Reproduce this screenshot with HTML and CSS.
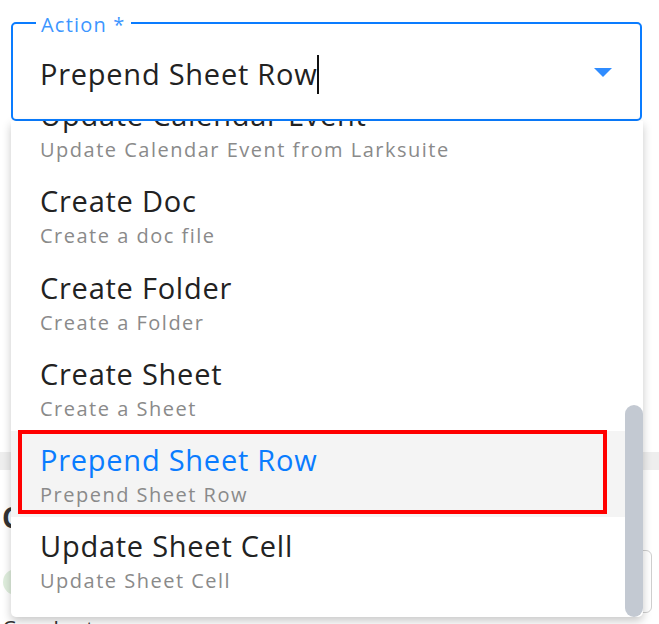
FILE: index.html
```html
<!DOCTYPE html>
<html>
<head>
<meta charset="utf-8">
<link rel="stylesheet" href="styles.css">
</head>
<body>
<div class="page">
  <fieldset class="field">
    <legend class="field-label">Action *</legend>
    <div class="field-row">
      <span class="field-value">Prepend Sheet Row</span><span class="caret"></span>
      <svg class="arrow" width="18" height="9" viewBox="0 0 18 9"><path d="M0 0 L18 0 L9 9 Z" fill="#2f8cff"/></svg>
    </div>
  </fieldset>
  <div class="behind">
    <div class="band"></div>
    <div class="heading">Configure</div>
    <div class="avatar-row"><span class="avatar"></span><span class="side-box"></span></div>
    <div class="conf">Conduct</div>
  </div>

  <div class="menu">
    <ul class="list">
      <li class="item"><div class="title">Update Calendar Event</div><div class="sub">Update Calendar Event from Larksuite</div></li>
      <li class="item"><div class="title">Create Doc</div><div class="sub">Create a doc file</div></li>
      <li class="item"><div class="title">Create Folder</div><div class="sub">Create a Folder</div></li>
      <li class="item"><div class="title">Create Sheet</div><div class="sub">Create a Sheet</div></li>
      <li class="item active"><div class="title">Prepend Sheet Row</div><div class="sub">Prepend Sheet Row</div><span class="mark"></span></li>
      <li class="item"><div class="title">Update Sheet Cell</div><div class="sub">Update Sheet Cell</div></li>
    </ul>
    <div class="scrollbar"></div>
  </div>
</div>
</body>
</html>
```

FILE: styles.css
```css
* { box-sizing: border-box; }
html, body { margin: 0; padding: 0; background: #fff; }
body { font-family: "Open Sans", "Noto Sans", sans-serif; width: 659px; height: 624px; overflow: hidden; }
.page { position: relative; width: 659px; height: 624px; padding-top: 8px; }

.field {
  margin: 0 0 0 11px;
  width: 631px;
  height: 113px;
  border: 2px solid #0a7cff;
  border-radius: 5px;
  padding: 0 27px;
  min-width: 0;
}
.field-label {
  padding: 4px 5px 0;
  margin-left: -4px;
  font-size: 20px;
  line-height: 26px;
  letter-spacing: 1.2px;
  color: #3d96ff;
}
.field-row {
  display: flex;
  align-items: center;
  height: 40px;
  margin-top: 16px;
}
.field-value { font-size: 29px; line-height: 40px; color: #222; letter-spacing: 0.75px; }
.caret { width: 2px; height: 39px; background: #111; margin-left: 0; }
.arrow { margin-left: auto; margin-right: 1px; margin-bottom: 3px; }

.behind { position: relative; }
.band { height: 18px; background: #eeeeee; margin-top: 331px; }
.heading { font-size: 28px; font-weight: 700; color: #333; margin-top: 29px; line-height: 36px; padding-left: 2px; }
.avatar-row { display: flex; align-items: center; justify-content: space-between; height: 63px; margin-top: 15px; }
.avatar { width: 26px; height: 26px; border-radius: 50%; background: #dfeedd; margin-left: 3px; }
.side-box { width: 20px; height: 63px; border: 1px solid #cfcfcf; border-radius: 6px; margin-right: 7px; }
.conf { font-size: 22px; line-height: 30px; color: #333; margin-top: 0; padding-left: 2px; letter-spacing: 1px; }

.menu {
  position: absolute;
  left: 11px;
  top: 121px;
  width: 632px;
  height: 496px;
  background: #fff;
  border-radius: 0 0 5px 5px;
  box-shadow: 0 4px 10px rgba(0,0,0,0.22);
  overflow: hidden;
}
.list { list-style: none; margin: -35px 0 0 0; padding: 0; }
.item {
  position: relative;
  height: 86.25px;
  padding: 11px 0 0 29px;
}
.title { font-size: 29px; line-height: 36px; color: #222; letter-spacing: 0.75px; white-space: nowrap; }
.sub { font-size: 20px; line-height: 28px; margin-top: 3px; color: #8a8a8a; letter-spacing: 1.5px; white-space: nowrap; }
.item.active { background: #f4f4f4; }
.item.active .title { color: #0a7cff; }
.mark {
  position: absolute;
  left: 7px;
  top: -1px;
  width: 589px;
  height: 84px;
  border: 4px solid #ff0000;
}
.scrollbar {
  position: absolute;
  right: 0;
  top: 284px;
  width: 18px;
  height: 212px;
  border-radius: 9px;
  background: #c3c9d2;
}
```
